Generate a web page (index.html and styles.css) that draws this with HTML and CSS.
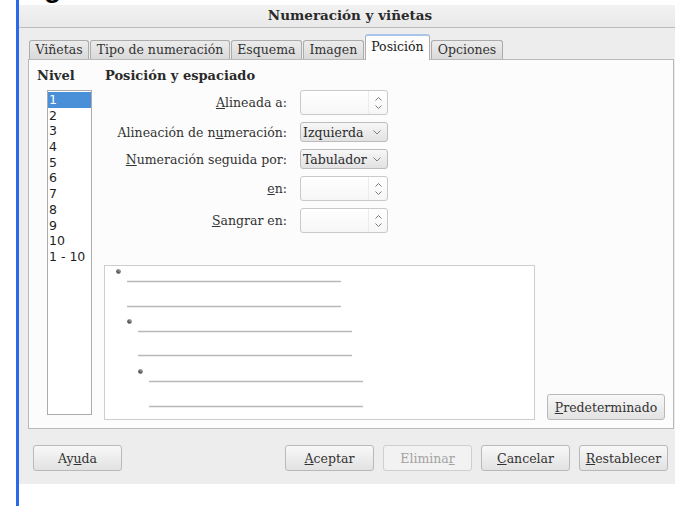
FILE: index.html
```html
<!DOCTYPE html>
<html lang="es">
<head>
<meta charset="utf-8">
<title>Numeración y viñetas</title>
<link rel="stylesheet" href="styles.css">
</head>
<body>
<div class="screen">
  <div class="edge"></div>
  <div class="stage">
    <div class="backdrop"><span class="backdrop-glyph">g</span></div>
    <div class="dialog">
      <div class="titlebar">Numeración y viñetas</div>
      <div class="content">
        <div class="tabs">
          <div class="tab">Viñetas</div>
          <div class="tab">Tipo de numeración</div>
          <div class="tab">Esquema</div>
          <div class="tab">Imagen</div>
          <div class="tab active">Posición</div>
          <div class="tab">Opciones</div>
        </div>
        <div class="panel">
          <div class="levels">
            <div class="heading">Nivel</div>
            <ul class="level-list">
              <li class="selected">1</li>
              <li>2</li>
              <li>3</li>
              <li>4</li>
              <li>5</li>
              <li>6</li>
              <li>7</li>
              <li>8</li>
              <li>9</li>
              <li>10</li>
              <li>1 - 10</li>
            </ul>
          </div>
          <div class="main">
            <div class="heading">Posición y espaciado</div>
            <div class="form">
              <label class="label"><u>A</u>lineada a:</label>
              <div class="spin">
                <span class="spin-field"></span>
                <span class="spin-arrows">
                  <svg width="7" height="4" viewBox="0 0 7 4"><polyline points="0.5,3.5 3.5,0.5 6.5,3.5" fill="none" stroke="#7a7a7a" stroke-width="1"/></svg>
                  <svg width="7" height="4" viewBox="0 0 7 4"><polyline points="0.5,0.5 3.5,3.5 6.5,0.5" fill="none" stroke="#7a7a7a" stroke-width="1"/></svg>
                </span>
              </div>

              <label class="label">Alineación de n<u>u</u>meración:</label>
              <div class="select">
                <span class="select-value">Izquierda</span>
                <svg width="8" height="5" viewBox="0 0 8 5"><polyline points="0.5,0.5 4,4 7.5,0.5" fill="none" stroke="#808080" stroke-width="1"/></svg>
              </div>

              <label class="label"><u>N</u>umeración seguida por:</label>
              <div class="select">
                <span class="select-value">Tabulador</span>
                <svg width="8" height="5" viewBox="0 0 8 5"><polyline points="0.5,0.5 4,4 7.5,0.5" fill="none" stroke="#808080" stroke-width="1"/></svg>
              </div>

              <label class="label"><u>e</u>n:</label>
              <div class="spin">
                <span class="spin-field"></span>
                <span class="spin-arrows">
                  <svg width="7" height="4" viewBox="0 0 7 4"><polyline points="0.5,3.5 3.5,0.5 6.5,3.5" fill="none" stroke="#7a7a7a" stroke-width="1"/></svg>
                  <svg width="7" height="4" viewBox="0 0 7 4"><polyline points="0.5,0.5 3.5,3.5 6.5,0.5" fill="none" stroke="#7a7a7a" stroke-width="1"/></svg>
                </span>
              </div>

              <label class="label"><u>S</u>angrar en:</label>
              <div class="spin">
                <span class="spin-field"></span>
                <span class="spin-arrows">
                  <svg width="7" height="4" viewBox="0 0 7 4"><polyline points="0.5,3.5 3.5,0.5 6.5,3.5" fill="none" stroke="#7a7a7a" stroke-width="1"/></svg>
                  <svg width="7" height="4" viewBox="0 0 7 4"><polyline points="0.5,0.5 3.5,3.5 6.5,0.5" fill="none" stroke="#7a7a7a" stroke-width="1"/></svg>
                </span>
              </div>
            </div>
            <div class="bottom-row">
              <div class="preview">
                <svg width="429" height="153" viewBox="0 0 429 153">
                  <defs>
                    <radialGradient id="bead" cx="0.65" cy="0.35" r="0.8">
                      <stop offset="0" stop-color="#9a9a9a"/>
                      <stop offset="1" stop-color="#2a2a2a"/>
                    </radialGradient>
                  </defs>
                  <g fill="url(#bead)">
                    <circle cx="13.5" cy="5.5" r="2.3"/>
                    <circle cx="24.5" cy="55.5" r="2.3"/>
                    <circle cx="35.5" cy="105.5" r="2.3"/>
                  </g>
                  <g stroke="#b8b8b8" stroke-width="1.6">
                    <line x1="22" y1="15.5" x2="236" y2="15.5"/>
                    <line x1="22" y1="40.5" x2="236" y2="40.5"/>
                    <line x1="33" y1="65.5" x2="247" y2="65.5"/>
                    <line x1="33" y1="89.5" x2="247" y2="89.5"/>
                    <line x1="44" y1="115.5" x2="258" y2="115.5"/>
                    <line x1="44" y1="140.5" x2="258" y2="140.5"/>
                  </g>
                </svg>
              </div>
              <button class="btn wide"><u>P</u>redeterminado</button>
            </div>
          </div>
        </div>
      </div>
      <div class="buttons">
        <button class="btn">Ay<u>u</u>da</button>
        <div class="button-group">
          <button class="btn"><u>A</u>ceptar</button>
          <button class="btn disabled">Elimina<u>r</u></button>
          <button class="btn"><u>C</u>ancelar</button>
          <button class="btn"><u>R</u>establecer</button>
        </div>
      </div>
    </div>
  </div>
</div>
</body>
</html>
```

FILE: styles.css
```css
* {
  box-sizing: border-box;
}

html,
body {
  margin: 0;
  background: #ffffff;
}

body {
  font-family: "DejaVu Serif", serif;
  font-size: 12.5px;
  color: #2f2f2f;
}

.screen {
  display: flex;
  height: 506px;
}

/* window frame edge on the left */
.edge {
  flex: none;
  width: 3px;
  margin-left: 16px;
  background: #2a6ae9;
}

.stage {
  flex: 1;
  display: flex;
  flex-direction: column;
}

/* strip of the document behind the dialog */
.backdrop {
  height: 5px;
  overflow: hidden;
  padding-left: 25px;
}

.backdrop-glyph {
  display: block;
  margin-top: -26px;
  font: bold 28px/28px "Liberation Sans", sans-serif;
  color: #000;
}

.dialog {
  height: 479px;
  background: #ededed;
  display: flex;
  flex-direction: column;
}

.titlebar {
  height: 23px;
  padding-left: 6px;
  border-bottom: 1px solid #bdbdbd;
  background: linear-gradient(#f2f2f2, #e9e9e9);
  text-align: center;
  font-weight: bold;
  font-size: 13.5px;
  line-height: 21px;
  color: #2a2a2a;
}

.content {
  padding: 6px 1px 0 9px;
}

/* tab strip */
.tabs {
  display: flex;
  align-items: flex-end;
  height: 25px;
  padding-left: 1px;
}

.tab {
  height: 19px;
  margin-right: 1px;
  padding: 0 5.5px;
  border: 1px solid #ababab;
  border-bottom: none;
  border-radius: 3px 3px 0 0;
  background: linear-gradient(#ececec, #d9d9d9);
  line-height: 18px;
  color: #333;
}

.tab.active {
  position: relative;
  z-index: 1;
  height: 26px;
  margin-bottom: -1px;
  border-color: #b0b0b0;
  border-top: 2px solid #a9c6ea;
  background: #fdfdfd;
  line-height: 21px;
  color: #222;
}

.panel {
  height: 370px;
  display: flex;
  padding: 8px 8px 8px 8px;
  border: 1px solid #b9b9b9;
  background: #fcfcfc;
}

.heading {
  font-weight: bold;
  font-size: 13px;
  line-height: 16px;
  color: #2a2a2a;
}

/* level column */
.levels {
  flex: none;
  width: 68px;
}

.level-list {
  list-style: none;
  margin: 6px 0 0 10px;
  padding: 1px 0 0;
  width: 45px;
  height: 325px;
  border: 1px solid #ababab;
  background: #ffffff;
  font-family: "DejaVu Sans", sans-serif;
  font-size: 12.5px;
  color: #1e1e1e;
}

.level-list li {
  height: 15.7px;
  line-height: 15.7px;
  padding-left: 1px;
  white-space: pre;
}

.level-list li.selected {
  background: #4a90d9;
  color: #ffffff;
}

/* position settings */
.main {
  flex: 1;
  display: flex;
  flex-direction: column;
}

.form {
  display: grid;
  grid-template-columns: 182px 88px;
  column-gap: 13px;
  row-gap: 7px;
  margin-top: 6px;
  align-items: center;
}

.label {
  text-align: right;
  white-space: nowrap;
  color: #333;
}

.spin {
  display: flex;
  height: 25px;
  border: 1px solid #c9c9c9;
  border-radius: 3px;
  background: linear-gradient(#ffffff, #f6f6f6);
}

.spin-field {
  flex: 1;
  border-right: 1px solid #ececec;
}

.spin-arrows {
  width: 18px;
  display: flex;
  flex-direction: column;
  justify-content: space-between;
  align-items: center;
  padding: 6px 0 5px;
}

.spin-arrows svg {
  display: block;
}

.select {
  display: flex;
  align-items: center;
  justify-content: space-between;
  height: 20px;
  padding: 0 6px 0 2px;
  border: 1px solid #bcbcbc;
  border-radius: 3px;
  background: linear-gradient(#f7f7f7, #e2e2e2);
  color: #2b2b2b;
}

.select svg {
  display: block;
}

.bottom-row {
  display: flex;
  align-items: flex-end;
  gap: 12px;
  margin-top: 32px;
  margin-left: -1px;
}

.preview {
  width: 431px;
  height: 155px;
  border: 1px solid #cdcdcd;
  background: #ffffff;
}

.preview svg {
  display: block;
}

/* push buttons */
.btn {
  width: 89px;
  height: 26px;
  padding: 0;
  border: 1px solid #b9b9b9;
  border-radius: 3px;
  background: linear-gradient(#f8f8f8, #e2e2e2);
  font-family: "DejaVu Serif", serif;
  font-size: 12.5px;
  color: #333;
}

.btn.wide {
  width: 118px;
}

.btn.disabled {
  border-color: #cfcfcf;
  background: #f2f2f2;
  color: #a3a3a3;
}

.buttons {
  display: flex;
  justify-content: space-between;
  padding: 16px 7px 0 14px;
}

.button-group {
  display: flex;
  gap: 9px;
}
```
